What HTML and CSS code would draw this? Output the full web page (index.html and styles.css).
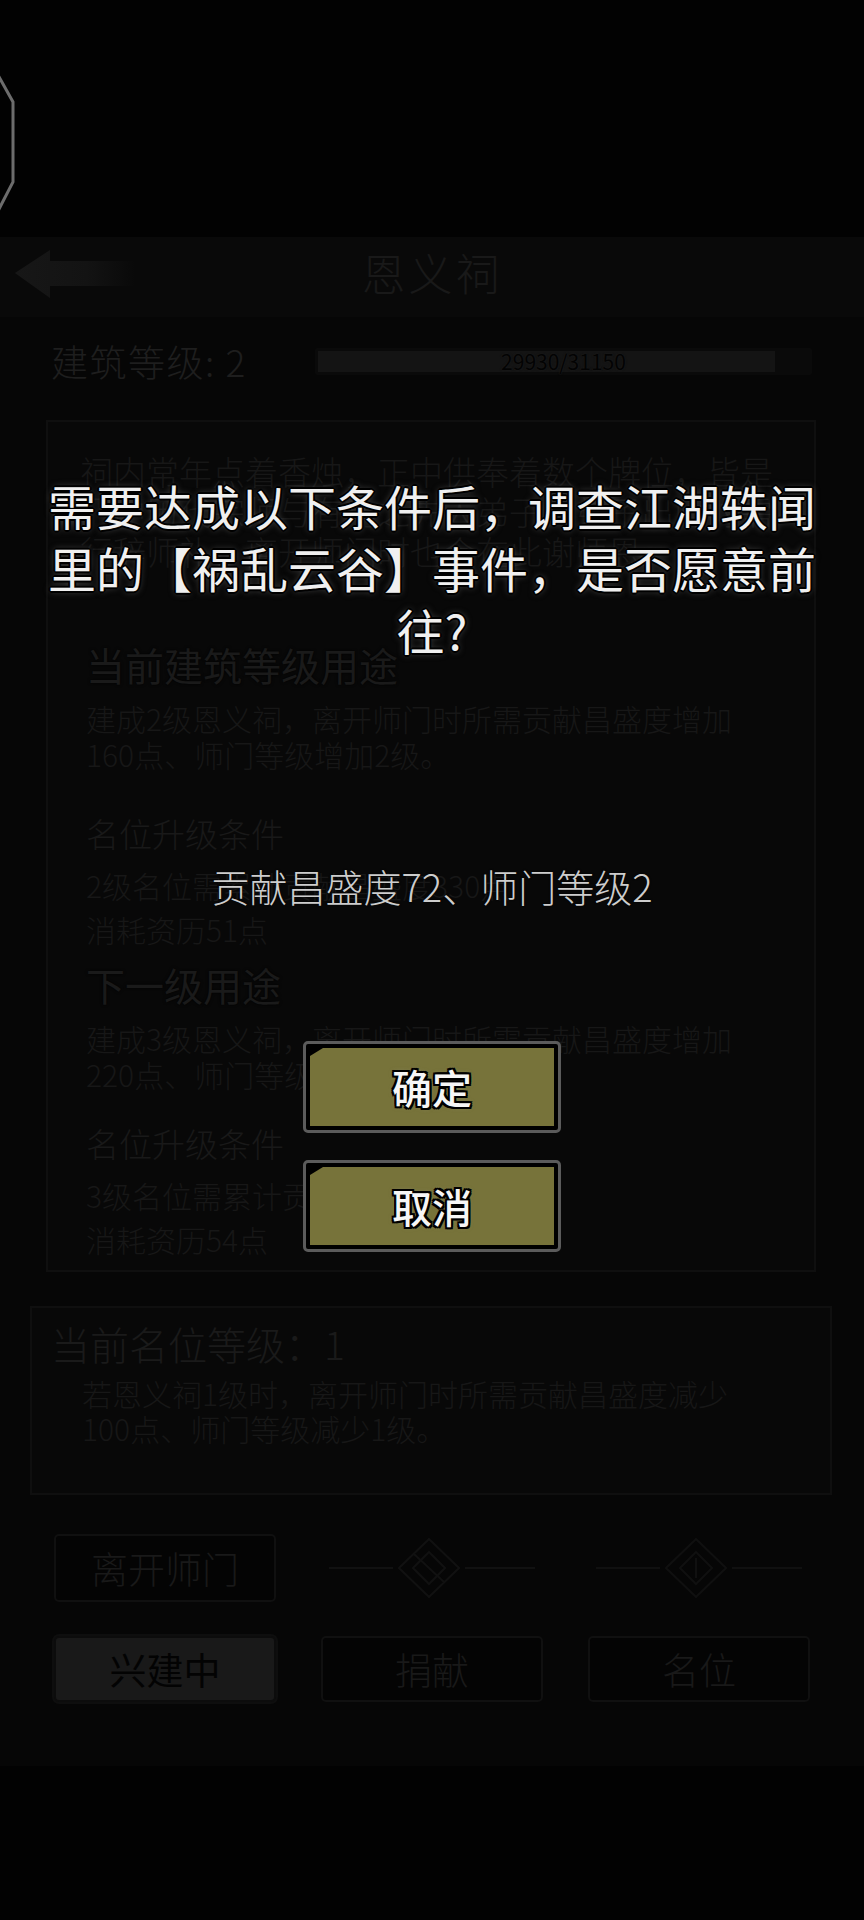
FILE: index.html
```html
<!DOCTYPE html>
<html lang="zh-CN">

<head>
    <meta charset="UTF-8">
    <meta name="viewport" content="width=device-width, initial-scale=1.0">
    <title>恩义祠</title>
    <link rel="stylesheet" href="styles.css">
</head>

<body>
    <div class="screen">
        <div class="top">
            <svg class="octagon" width="16" height="140" viewBox="0 0 16 140">
                <polyline points="-2,0 13,27 13,107 -2,136" fill="none" stroke="#6c6c6c" stroke-width="3" />
            </svg>
        </div>

        <div class="main">
            <div class="header">
                <svg class="back" width="125" height="50" viewBox="0 0 125 50">
                    <defs>
                        <linearGradient id="arrowFade" x1="0" y1="0" x2="1" y2="0">
                            <stop offset="0" stop-color="#171717" />
                            <stop offset="0.6" stop-color="#131313" />
                            <stop offset="1" stop-color="#090909" />
                        </linearGradient>
                    </defs>
                    <path d="M0,23 L35,0 L35,11 L120,11 L120,36 L35,36 L35,48 Z" fill="url(#arrowFade)" />
                </svg>
                <h1>恩义祠</h1>
                <div></div>
            </div>

            <div class="level-row">
                <span class="level">建筑等级: 2</span>
                <div class="bar">
                    <div class="bar-fill" style="width:93%"></div>
                    <span class="bar-text">29930/31150</span>
                </div>
            </div>

            <div class="panel panel-build">
                <p class="intro">祠内常年点着香烛，正中供奉着数个牌位，皆是<br>门中历代宗师与有功之先人弟子，弟子出师时需<br>行辞师礼，离开师门时也会在此谢师恩。</p>

                <div class="block">
                    <h2>当前建筑等级用途</h2>
                    <p class="desc">建成2级恩义祠，离开师门时所需贡献昌盛度增加<br>160点、师门等级增加2级。</p>
                    <h3>名位升级条件</h3>
                    <p class="req">2级名位需累计贡献昌盛度330点<br>消耗资历51点</p>
                </div>

                <div class="block next">
                    <h2>下一级用途</h2>
                    <p class="desc">建成3级恩义祠，离开师门时所需贡献昌盛度增加<br>220点、师门等级增加3级。</p>
                    <h3>名位升级条件</h3>
                    <p class="req">3级名位需累计贡献昌盛度480点<br>消耗资历54点</p>
                </div>
            </div>

            <div class="panel panel-rank">
                <h2>当前名位等级：1</h2>
                <p>若恩义祠1级时，离开师门时所需贡献昌盛度减少<br>100点、师门等级减少1级。</p>
            </div>

            <div class="actions">
                <button class="btn">离开师门</button>
                <div class="ornament">
                    <svg width="206" height="60" viewBox="0 0 206 60">
                        <g fill="none" stroke="#111111" stroke-width="2">
                            <line x1="0" y1="30" x2="64" y2="30" />
                            <polygon points="100,1 130,30 100,59 70,30" />
                            <polygon points="100,14 116,30 100,46 84,30" />
                            <line x1="85" y1="16" x2="115" y2="44" />
                            <line x1="136" y1="30" x2="206" y2="30" />
                        </g>
                    </svg>
                </div>
                <div class="ornament">
                    <svg width="206" height="60" viewBox="0 0 206 60">
                        <g fill="none" stroke="#101010" stroke-width="2">
                            <line x1="0" y1="30" x2="64" y2="30" />
                            <polygon points="100,1 130,30 100,59 70,30" />
                            <polygon points="100,14 116,30 100,46 84,30" />
                            <line x1="100" y1="20" x2="100" y2="40" />
                            <line x1="136" y1="30" x2="206" y2="30" />
                        </g>
                    </svg>
                </div>
            </div>

            <div class="tabs">
                <button class="tab active">兴建中</button>
                <button class="tab">捐献</button>
                <button class="tab">名位</button>
            </div>
        </div>

        <!-- confirm dialog -->
        <div class="modal">
            <p class="question">需要达成以下条件后，调查江湖轶闻里的【祸乱云谷】事件，是否愿意前往?</p>
            <p class="cond">贡献昌盛度72、师门等级2</p>
            <button class="dlg-btn confirm"><span>确定</span></button>
            <button class="dlg-btn cancel"><span>取消</span></button>
        </div>
    </div>
</body>

</html>
```

FILE: styles.css
```css
* {
    box-sizing: border-box;
}

body {
    margin: 0;
    background-color: #020202;
    font-family: "Noto Sans CJK SC", "Noto Sans", sans-serif;
}

.screen {
    position: relative;
    width: 864px;
    height: 1920px;
    overflow: hidden;
}

.top {
    height: 237px;
    padding-top: 75px;
}

.octagon {
    display: block;
}

.main {
    background-color: #060606;
    padding-bottom: 64px;
}

/* header */
.header {
    height: 80px;
    background-color: #090909;
    display: grid;
    grid-template-columns: 1fr auto 1fr;
}

.back {
    margin: 13px 0 0 15px;
}

.header h1 {
    margin: 0;
    padding-top: 10px;
    font-size: 44px;
    line-height: 50px;
    font-weight: 300;
    letter-spacing: 3px;
    color: #191919;
}

/* level + progress */
.level-row {
    height: 103px;
    display: flex;
    align-items: flex-start;
    padding: 24px 52px 0 51px;
}

.level {
    font-size: 37px;
    line-height: 40px;
    font-weight: 300;
    letter-spacing: 1.5px;
    color: #1e1e1e;
}

.bar {
    position: relative;
    margin: 7px 0 0 auto;
    width: 497px;
    height: 27px;
    padding: 3px;
    background-color: #0a0a0a;
    border-radius: 2px;
}

.bar-fill {
    height: 100%;
    background-color: #141414;
}

.bar-text {
    position: absolute;
    left: 0;
    right: 0;
    top: 0;
    text-align: center;
    font-size: 21px;
    line-height: 27px;
    color: #030303;
    text-shadow: 0 0 2px #1c1c1c, 0 0 1px #1c1c1c;
}

/* panels */
.panel {
    background-color: #080808;
    border: 2px solid #0f0f0f;
    color: #171717;
    font-weight: 300;
}

.panel p,
.panel h2,
.panel h3 {
    margin: 0;
    white-space: nowrap;
}

.panel-build {
    margin: 0 48px 0 46px;
    padding: 29px 38px 9px;
}

.intro {
    margin-left: -6px !important;
    font-size: 33px;
    line-height: 40px;
}

.block h2 {
    margin-top: 69px;
    font-size: 39px;
    line-height: 48px;
    font-weight: 400;
    color: #1a1a1a;
    text-shadow: 0 0 3px #000;
}

.block.next h2 {
    margin-top: 9px;
}

.desc {
    margin-top: 12px !important;
    font-size: 30px;
    line-height: 36px;
}

.block h3 {
    margin-top: 39px;
    font-size: 33px;
    line-height: 44px;
    font-weight: 300;
    color: #191919;
}

.block.next h3 {
    margin-top: 29px;
}

.req {
    margin-top: 8px !important;
    font-size: 30px;
    line-height: 44px;
}

.panel-rank {
    margin: 34px 32px 0 30px;
    height: 189px;
    padding: 12px 19px 0;
}

.panel-rank h2 {
    font-size: 39px;
    line-height: 46px;
    font-weight: 300;
    color: #1a1a1a;
}

.panel-rank p {
    margin: 10px 0 0 31px;
    font-size: 30px;
    line-height: 35px;
}

/* bottom buttons */
.actions,
.tabs {
    display: grid;
    grid-template-columns: repeat(3, 222px);
    gap: 45px;
    padding-left: 54px;
}

.actions {
    margin-top: 39px;
    height: 68px;
}

.tabs {
    margin-top: 34px;
    height: 66px;
}

.btn,
.tab {
    font-family: inherit;
    font-size: 37px;
    font-weight: 300;
    color: #191919;
    background-color: #040404;
    border: 2px solid #101010;
    border-radius: 5px;
    padding: 0;
}

.tab.active {
    background-color: #191919;
    border-color: #0c0c0c;
    color: #030303;
    font-weight: 400;
    box-shadow: 0 0 0 2px #0e0e0e;
}

.ornament {
    display: flex;
    align-items: center;
    justify-content: center;
}

.ornament svg {
    display: block;
}

/* dialog */
.modal {
    position: absolute;
    top: 0;
    left: 0;
    width: 864px;
    height: 1920px;
    display: flex;
    flex-direction: column;
    align-items: center;
    padding-top: 474px;
}

.question {
    width: 780px;
    margin: 0;
    text-align: center;
    font-size: 48px;
    line-height: 62px;
    font-weight: 400;
    color: #f0f0f0;
    text-shadow: -2px 0 0 #000, 2px 0 0 #000, 0 -2px 0 #000, 0 2px 0 #000,
        -1px -1px 0 #000, 1px 1px 0 #000, -1px 1px 0 #000, 1px -1px 0 #000,
        0 0 7px rgba(140, 140, 140, 0.6);
}

.cond {
    margin: 203px 0 0;
    font-size: 38px;
    line-height: 46px;
    font-weight: 300;
    color: #cdcdcd;
    text-shadow: 0 0 2px #000;
}

.dlg-btn {
    width: 258px;
    padding: 4px;
    border: 3px solid #5b5b5b;
    border-radius: 5px;
    background-color: #000;
    font-family: inherit;
}

.dlg-btn span {
    display: flex;
    align-items: center;
    justify-content: center;
    height: 78px;
    background-color: #77733a;
    clip-path: polygon(13px 0, 100% 0, 100% 100%, 0 100%, 0 8px);
    font-size: 40px;
    font-weight: 500;
    color: #f6f6f6;
    text-shadow: -2px 0 0 #000, 2px 0 0 #000, 0 -2px 0 #000, 0 2px 0 #000,
        -2px -2px 0 #000, 2px 2px 0 #000, -2px 2px 0 #000, 2px -2px 0 #000,
        0 0 5px rgba(160, 160, 160, 0.5);
}

.confirm {
    margin-top: 132px;
}

.cancel {
    margin-top: 27px;
}
```
